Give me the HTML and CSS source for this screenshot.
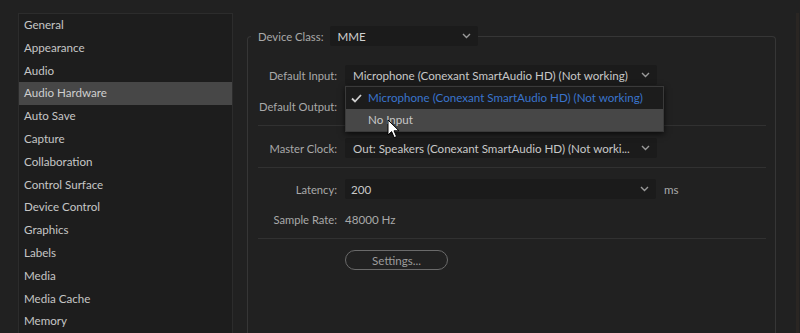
FILE: index.html
```html
<!DOCTYPE html>
<html>
<head>
<meta charset="utf-8">
<link rel="stylesheet" href="styles.css">
</head>
<body>
<div class="app">
  <nav class="sidebar">
    <div class="nav-item">General</div>
    <div class="nav-item">Appearance</div>
    <div class="nav-item">Audio</div>
    <div class="nav-item selected">Audio Hardware</div>
    <div class="nav-item">Auto Save</div>
    <div class="nav-item">Capture</div>
    <div class="nav-item">Collaboration</div>
    <div class="nav-item">Control Surface</div>
    <div class="nav-item">Device Control</div>
    <div class="nav-item">Graphics</div>
    <div class="nav-item">Labels</div>
    <div class="nav-item">Media</div>
    <div class="nav-item">Media Cache</div>
    <div class="nav-item">Memory</div>
  </nav>
  <main class="main">
    <fieldset class="group">
      <legend class="legend">
        <span class="label-inline">Device Class:</span>
        <span class="select select-class">MME<svg class="chev" width="9" height="6" viewBox="0 0 9 6"><path d="M1 1l3.5 3.5L8 1" fill="none" stroke="#9a9a9a" stroke-width="1.4"/></svg></span>
      </legend>
      <div class="rows">
        <div class="row row-input">
          <span class="label">Default Input:</span>
          <span class="select">Microphone (Conexant SmartAudio HD) (Not working)<svg class="chev" width="9" height="6" viewBox="0 0 9 6"><path d="M1 1l3.5 3.5L8 1" fill="none" stroke="#9a9a9a" stroke-width="1.4"/></svg></span>
          <div class="menu">
            <div class="menu-item checked"><svg class="check" width="11" height="9" viewBox="0 0 11 9"><path d="M1 4.5l3 3L10 1" fill="none" stroke="#cfcfcf" stroke-width="1.8"/></svg>Microphone (Conexant SmartAudio HD) (Not working)</div>
            <div class="menu-item hover">No Input</div>
            <svg class="cursor" width="13" height="20" viewBox="0 0 13 20"><path d="M1 1v15l3.6-3.4 2.6 6 2.4-1-2.6-5.8H12z" fill="#fff" stroke="#000" stroke-width="1"/></svg>
          </div>
        </div>
        <div class="row row-output">
          <span class="label">Default Output:</span>
          <span class="select"></span>
        </div>
        <div class="sep"></div>
        <div class="row">
          <span class="label">Master Clock:</span>
          <span class="select">Out: Speakers (Conexant SmartAudio HD) (Not worki...<svg class="chev" width="9" height="6" viewBox="0 0 9 6"><path d="M1 1l3.5 3.5L8 1" fill="none" stroke="#9a9a9a" stroke-width="1.4"/></svg></span>
        </div>
        <div class="sep"></div>
        <div class="row row-latency">
          <span class="label">Latency:</span>
          <span class="select select-latency">200<svg class="chev" width="9" height="6" viewBox="0 0 9 6"><path d="M1 1l3.5 3.5L8 1" fill="none" stroke="#9a9a9a" stroke-width="1.4"/></svg></span>
          <span class="unit">ms</span>
        </div>
        <div class="row row-rate">
          <span class="label">Sample Rate:</span>
          <span class="value">48000 Hz</span>
        </div>
        <div class="sep"></div>
        <div class="row row-settings">
          <span class="label"></span>
          <button class="btn">Settings...</button>
        </div>
      </div>
    </fieldset>
  </main>
  <div class="edge"></div>
</div>
</body>
</html>
```
FILE: styles.css
```css
* { box-sizing: border-box; }
html, body { margin: 0; padding: 0; }
body {
  background: #212121;
  font-family: Lato, "Open Sans", sans-serif;
  font-size: 11.6px;
  color: #c4c4c4;
  width: 800px;
  height: 333px;
  overflow: hidden;
}
.app {
  display: flex;
  height: 333px;
  padding: 13px 0 0 18px;
}
.sidebar {
  width: 215px;
  flex: none;
  background: #1d1d1d;
  border: 1px solid #2c2c2c;
  border-bottom: none;
  padding-top: 0;
}
.nav-item {
  height: 22.8px;
  line-height: 22.8px;
  padding-left: 5px;
  color: #c6c6c6;
  white-space: nowrap;
}
.nav-item.selected {
  background: #474747;
  color: #cfcfcf;
}
.main {
  flex: none;
  width: 529px;
  margin-left: 14px;
  margin-top: 13px;
}
.group {
  margin: 0;
  padding: 0;
  border: 1px solid #363636;
  border-bottom: none;
  border-radius: 4px 4px 0 0;
  height: 320px;
  min-width: 0;
}
.legend {
  margin-left: 3px;
  padding: 0 0 0 7px;
  display: flex;
  align-items: center;
  height: 20px;
}
.label-inline {
  color: #a9a9a9;
  margin-right: 7px;
  font-size: 11.3px;
}
.select {
  position: relative;
  display: flex;
  align-items: center;
  height: 20px;
  width: 312px;
  padding: 0 0 0 8px;
  background: #1b1b1b;
  border-radius: 2px;
  color: #c8c8c8;
  white-space: nowrap;
}
.select-class {
  width: 148px;
  padding-left: 7px;
  color: #d0d0d0;
}
.chev {
  position: absolute;
  right: 7px;
  top: 7px;
}
.rows {
  padding-top: 19px;
  display: flex;
  flex-direction: column;
}
.row {
  position: relative;
  display: flex;
  align-items: center;
  height: 20px;
}
.label {
  width: 89px;
  flex: none;
  text-align: right;
  margin-right: 8px;
  color: #a9a9a9;
  font-size: 11.2px;
  white-space: nowrap;
}
.row-output { margin-top: 11px; }
.sep {
  height: 1px;
  background: #313131;
  margin: 9px 9px 12px 10px;
}
.row-latency { margin-top: -1px; }
.select-latency { width: 311px; padding-left: 6px; }
.unit { margin-left: 8px; color: #a9a9a9; }
.row-rate { margin-top: 10px; }
.value { color: #a9a9a9; }
.row-settings { margin-top: -1px; }
.btn {
  width: 103px;
  height: 20px;
  border: 1.5px solid #6a6a6a;
  border-radius: 10px;
  background: transparent;
  color: #9c9c9c;
  font-family: Lato, "Open Sans", sans-serif;
  font-size: 11.6px;
  padding: 0;
}
.menu {
  position: absolute;
  left: 97px;
  top: 21px;
  width: 319px;
  background: #222222;
  border: 1px solid #3a3a3a;
  box-shadow: 0 2px 6px rgba(0,0,0,0.7);
  z-index: 5;
}
.menu-item {
  height: 22px;
  line-height: 22px;
  padding-left: 22px;
  position: relative;
  white-space: nowrap;
}
.menu-item.checked { color: #3a74cc; background: #1c1c1c; }
.menu-item.hover { background: #474747; color: #c8c8c8; }
.check {
  position: absolute;
  left: 5px;
  top: 7px;
}
.cursor {
  position: absolute;
  left: 41px;
  top: 32px;
}
.edge {
  flex: none;
  width: 3px;
  margin-left: 20px;
  background: #2a2623;
}
```
